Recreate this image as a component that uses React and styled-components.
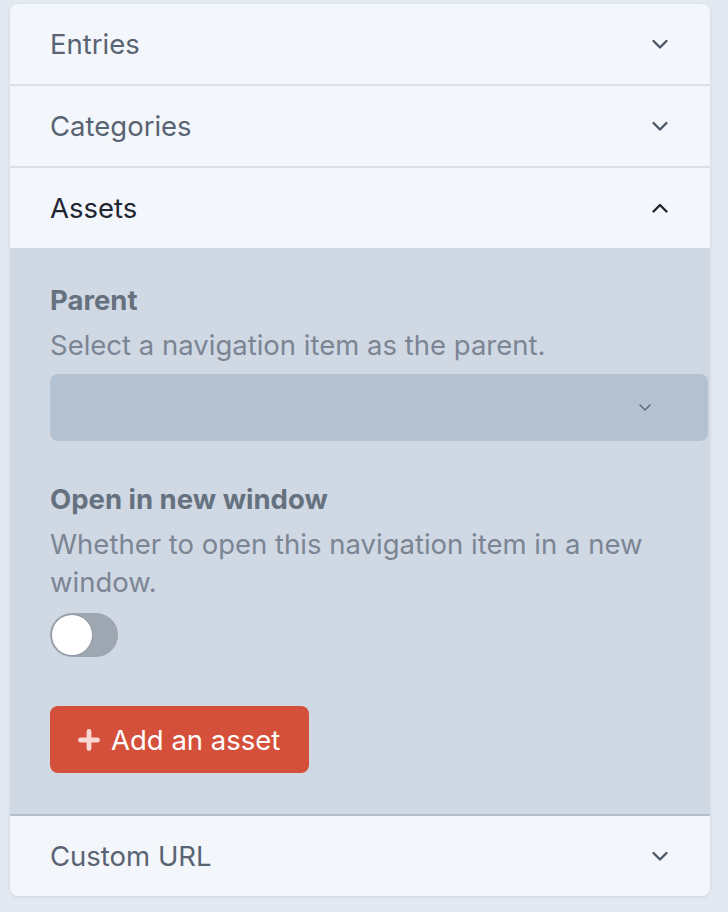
import React, { useState } from "react";
import styled, { createGlobalStyle } from "styled-components";

const GlobalStyle = createGlobalStyle`
  html, body {
    margin: 0;
    padding: 0;
    background: #e3e9f1;
  }
  body {
    font-family: Inter, "Noto Sans", "Liberation Sans", sans-serif;
    -webkit-font-smoothing: antialiased;
  }
`;

const Page = styled.div`
  padding: 4px 18px 16px 10px;
`;

const Card = styled.div`
  background: #f3f7fc;
  border-radius: 8px;
  box-shadow: 0 1px 3px rgba(100, 116, 139, 0.18);
  overflow: hidden;
`;

const borderFor = (p) => {
  if (p.$first) return "none";
  return `2px solid ${p.$afterOpen ? "#b2bdcc" : "#dbe0e7"}`;
};

const Section = styled.div`
  border-top: ${borderFor};
`;

const Header = styled.button`
  display: flex;
  align-items: center;
  justify-content: space-between;
  width: 100%;
  height: 80px;
  padding: 0 40px 0 40px;
  border: none;
  background: transparent;
  font-family: inherit;
  font-size: 27.5px;
  line-height: 36px;
  color: ${(p) => (p.$open ? "#1f2630" : "#596372")};
  cursor: pointer;
  text-align: left;
`;

const Chevron = styled.svg`
  width: 18px;
  height: 18px;
  margin-right: 1px;
  color: ${(p) => (p.$open ? "#1f2630" : "#4d5766")};
`;

const Panel = styled.div`
  background: #cfd8e3;
  padding: 34px 2px 41px 40px;
`;

const Field = styled.div`
  margin-top: ${(p) => (p.$first ? "0" : "40px")};
`;

const Label = styled.div`
  font-size: 27.5px;
  line-height: 36px;
  font-weight: 700;
  color: #667180;
`;

const Help = styled.div`
  margin-top: 8px;
  font-size: 27.5px;
  line-height: 38px;
  color: #7b8594;
  padding-right: 60px;
`;

const Select = styled.div`
  margin-top: 10px;
  height: 67px;
  border-radius: 8px;
  background: #b4c1d1;
  display: flex;
  align-items: center;
  justify-content: flex-end;
  padding-right: 57px;
`;

const SmallChevron = styled.svg`
  width: 12px;
  height: 7px;
  color: #5b6574;
`;

const Track = styled.button`
  margin-top: 12px;
  width: 68px;
  height: 44px;
  border-radius: 22px;
  border: none;
  padding: 2px;
  background: ${(p) => (p.$on ? "#d5503a" : "#9ea6b1")};
  display: flex;
  justify-content: ${(p) => (p.$on ? "flex-end" : "flex-start")};
  cursor: pointer;
`;

const Knob = styled.span`
  width: 40px;
  height: 40px;
  border-radius: 50%;
  background: #ffffff;
  box-shadow: 0 0 0 1px rgba(120, 130, 145, 0.35);
`;

const AddButton = styled.button`
  margin-top: 49px;
  display: inline-flex;
  align-items: center;
  gap: 11px;
  height: 67px;
  padding: 0 29px 0 28px;
  border: none;
  border-radius: 8px;
  background: #d4503a;
  color: #ffffff;
  font-family: inherit;
  font-size: 27.5px;
  cursor: pointer;
`;

const PlusIcon = styled.svg`
  width: 22px;
  height: 22px;
  color: #f7d8d2;
`;

const ChevronDown = ({ open }) => (
  <Chevron $open={open} viewBox="0 0 18 18" fill="none">
    <path
      d={open ? "M2.5 12.5 L9 6 L15.5 12.5" : "M2.5 6 L9 12.5 L15.5 6"}
      stroke="currentColor"
      strokeWidth="2.4"
      strokeLinecap="round"
      strokeLinejoin="round"
    />
  </Chevron>
);

const sections = ["Entries", "Categories", "Assets", "Custom URL"];

const App = () => {
  const [open, setOpen] = useState("Assets");
  const [newWindow, setNewWindow] = useState(false);

  return (
    <>
      <GlobalStyle />
      <Page>
        <Card>
          {sections.map((name, i) => (
            <Section
              key={name}
              $first={i === 0}
              $afterOpen={sections[i - 1] === open}
            >
              <Header
                $open={open === name}
                onClick={() => setOpen(open === name ? null : name)}
              >
                {name}
                <ChevronDown open={open === name} />
              </Header>
              {open === name && (
                <Panel>
                  <Field $first>
                    <Label>Parent</Label>
                    <Help>Select a navigation item as the parent.</Help>
                    <Select>
                      <SmallChevron viewBox="0 0 12 7" fill="none">
                        <path
                          d="M1 1 L6 6 L11 1"
                          stroke="currentColor"
                          strokeWidth="1.4"
                          strokeLinecap="round"
                          strokeLinejoin="round"
                        />
                      </SmallChevron>
                    </Select>
                  </Field>
                  <Field>
                    <Label>Open in new window</Label>
                    <Help>
                      Whether to open this navigation item in a new window.
                    </Help>
                    <Track
                      $on={newWindow}
                      onClick={() => setNewWindow(!newWindow)}
                    >
                      <Knob />
                    </Track>
                  </Field>
                  <AddButton>
                    <PlusIcon viewBox="0 0 22 22" fill="none">
                      <path
                        d="M11 2.5 V19.5 M2.5 11 H19.5"
                        stroke="currentColor"
                        strokeWidth="4.8"
                        strokeLinecap="round"
                      />
                    </PlusIcon>
                    Add an asset
                  </AddButton>
                </Panel>
              )}
            </Section>
          ))}
        </Card>
      </Page>
    </>
  );
};

export default App;
